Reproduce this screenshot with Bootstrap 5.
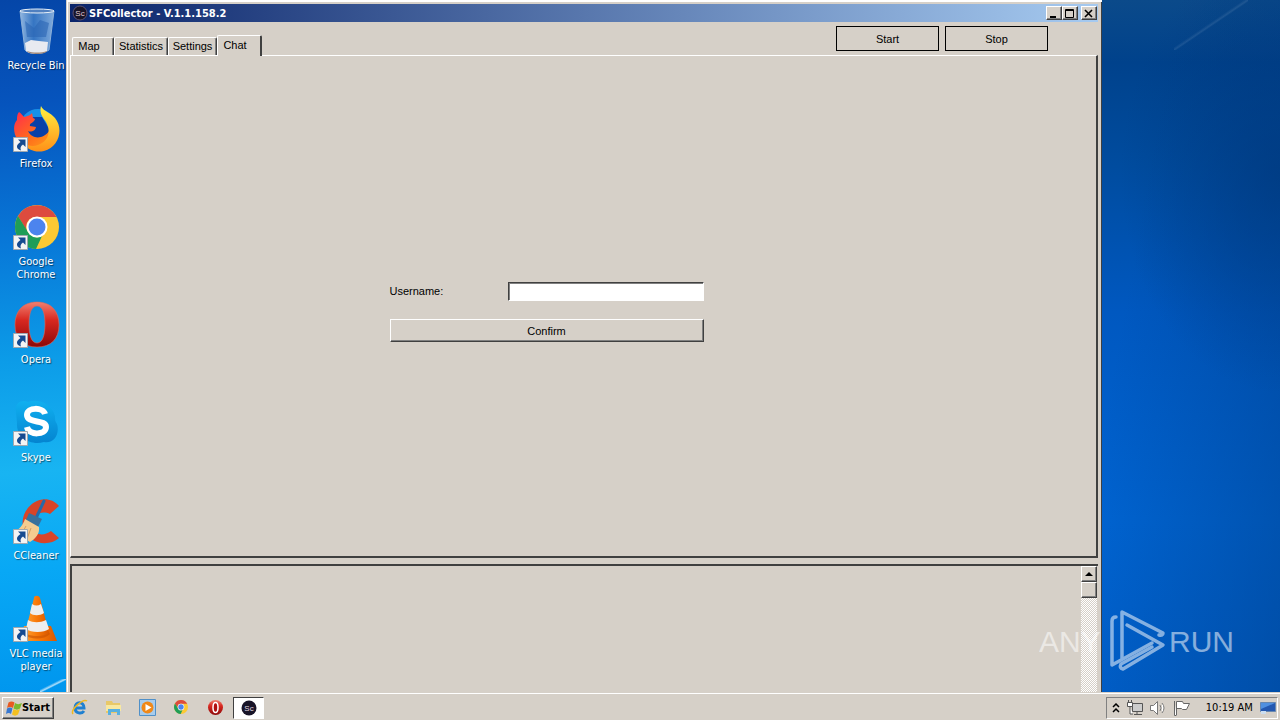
<!DOCTYPE html>
<html lang="en">
<head>
<meta charset="utf-8">
<meta name="viewport" content="width=device-width, initial-scale=1">
<title>SFCollector</title>
<link rel="stylesheet" href="https://cdn.jsdelivr.net/npm/bootstrap@5.3.0/dist/css/bootstrap.min.css">
<style>
:root { --face:#d6d0c8; --shade:#808080; --dark:#404040; }
body { font-family:"Liberation Sans",Arial,sans-serif; font-size:11px; line-height:13px; color:#000; background:#0058b8; }
button, input, textarea { font:inherit; color:inherit; border-radius:0; }
.tahoma { font-family:"DejaVu Sans Condensed","DejaVu Sans",sans-serif; }
.desk { background:
  linear-gradient(to bottom right, transparent 47%, #ffffff18 50%, transparent 52%) right 32px top 0/74px 50px no-repeat,
  radial-gradient(160px 220px at 100% 25%, #00357890, #00357800),
  linear-gradient(100deg, #0060d000 84%, #003a8078 100%),
  linear-gradient(180deg, #0b4a8a 0%, #00428c 9%, #004c9f 24%, #0058c0 45%, #0064d2 75%, #0060cc 100%); }
.shortcuts { width:66px; padding-left:6px;
  background:linear-gradient(to bottom right, transparent 40%, #ffffffb0 50%, transparent 56%) right bottom/26px 13px no-repeat,
  linear-gradient(176deg, #0546a8 0%, #0654bd 15%, #0878d8 35%, #0c9ce8 52%, #18b4f2 68%, #08a8f5 82%, #0096ee 100%); }
.shortcut { height:98px; padding-top:7px; color:#fff; text-shadow:1px 1px 1px #0008; }
.shortcut svg { width:48px; height:48px; margin-bottom:4px; }
.app { margin-right:178px; padding:4px 4px 0 4px; background:var(--face);
  box-shadow:inset 1px 0 #d4d0c8, inset 2px 2px #fff, inset -1px 0 #404040; }
.titlebar { height:18px; background:linear-gradient(90deg,#0a246a,#a6caf0); color:#fff; padding:0 1px 0 2px; }
.titlebar > svg { width:16px; height:16px; margin-right:1px; }
.raised { background:var(--face); border:1px solid; border-color:#fff var(--dark) var(--dark) #fff; box-shadow:inset -1px -1px var(--shade); padding:0; }
.caption-btn { width:16px; height:14px; }
.caption-btn + .caption-btn.shut { margin-left:3px; }
.caption-btn svg { width:12px; height:11px; display:block; margin:auto; }
.toolbar { height:33px; padding-right:50px; }
.tabs { padding-left:2px; }
.tab-btn { height:18px; background:var(--face); border:1px solid; border-color:#fff var(--dark) transparent #fff; border-bottom:0; box-shadow:inset -1px 0 var(--shade); padding:0; border-radius:2px 2px 0 0; }
.tab-btn.current { height:21px; margin-bottom:-1px; padding-bottom:2px; z-index:1; border-right-width:2px; box-shadow:none; }
.w-map { width:42px; padding-right:8px; } .w-stat { width:54px; } .w-set { width:49px; } .w-chat { width:45px; padding-right:8px; }
.run-btn { width:103px; height:25px; padding:2px 0 0; background:var(--face); border:1px solid #000; }
.page { flex:0 0 503px; border:1px solid #fff; border-right:2px solid var(--dark); border-bottom:2px solid var(--dark); padding:12px 74px 0 0; }
.login { width:314px; gap:18px; }
.login input { width:196px; height:19px; background:#fff; border:1px solid; border-color:#404040 #fff #fff #404040; box-shadow:inset 1px 1px #808080; padding:0 3px; }
.confirm { height:23px; padding-top:1px; }
.logbox { margin-top:6px; border:solid var(--dark); border-width:2px 0 0 2px; }
.logbox textarea { resize:none; background:var(--face); border:0; outline:0; }
.vbar { width:16px; margin-right:1px; background:repeating-conic-gradient(#fff 0 25%, var(--face) 0 50%) 0 0/2px 2px; }
.vbar .raised { height:16px; width:16px; }
.taskbar { height:28px; background:var(--face); border-top:1px solid var(--face); box-shadow:inset 0 1px #fff; padding:2px 2px 0; }
.start-btn { width:52px; height:22px; }
.start-btn svg { width:16px; height:16px; }
.quick { padding-left:17px; gap:17px; width:179px; }
.quick button, .quick svg { width:17px; height:17px; display:block; }
.plain { border:0; background:none; padding:0; }
.active-task { width:31px; height:22px; background:#fff; border:1px solid; border-color:#404040 #fff #fff #404040; padding:0; }
.tray { height:22px; width:172px; border:1px solid; border-color:var(--shade) #fff #fff var(--shade); padding:0 1px 0 5px; }
.watermark { right:47px; bottom:20px; width:194px; height:62px; opacity:.52; pointer-events:none; }
</style>
</head>
<body class="vh-100 overflow-hidden d-flex flex-column">

<svg width="0" height="0" class="position-absolute" aria-hidden="true">
  <defs>
    <linearGradient id="gRed" x2="0" y2="1"><stop stop-color="#f08070"/><stop offset=".4" stop-color="#d82820"/><stop offset="1" stop-color="#8c0808"/></linearGradient>
    <linearGradient id="gFox" x1="0" y1="0" x2="1" y2="1"><stop stop-color="#ff2a50"/><stop offset=".5" stop-color="#ff6a1c"/><stop offset="1" stop-color="#ffae18"/></linearGradient>
    <linearGradient id="gTail" x2="0" y2="1"><stop stop-color="#fff040"/><stop offset="1" stop-color="#ff9018"/></linearGradient>
    <linearGradient id="gCone" x2="1"><stop stop-color="#ffa030"/><stop offset=".5" stop-color="#f87808"/><stop offset="1" stop-color="#d85800"/></linearGradient>
    <linearGradient id="gSky" x2="0" y2="1"><stop stop-color="#10b0f0"/><stop offset="1" stop-color="#0484d0"/></linearGradient>
    <linearGradient id="gBin" x2="1"><stop stop-color="#b8d4ee" stop-opacity=".8"/><stop offset=".4" stop-color="#4a88cc" stop-opacity=".7"/><stop offset="1" stop-color="#a0c4e8" stop-opacity=".8"/></linearGradient>
  </defs>
  <symbol id="link" viewBox="0 0 15 15"><path fill="#f4f4f4" stroke="#a0a8b0" d="M.5.5h14v14H.5z"/><path fill="#164a90" d="M5 2.500h7.500V10L10 7.500C7.500 9 7 11 8 13.500 3 12 2.500 8 7.500 5z"/></symbol>
  <symbol id="chrome" viewBox="0 0 44 44"><circle cx="22" cy="22" r="22" fill="#fcc934"/><path fill="#dd4b3e" d="M3 11A22 22 0 0 1 41.500 12H22A10 10 0 0 0 12.500 27z"/><path fill="#1f9d58" d="M3 11 13 27A10 10 0 0 0 27 31L21 44A22 22 0 0 1 3 11z"/><circle cx="22" cy="22" r="10.500" fill="#fff"/><circle cx="22" cy="22" r="8.500" fill="#4c84ee"/></symbol>
  <symbol id="winflag" viewBox="0 0 16 16"><path fill="#e85a20" d="M2.500 2.500c2-1.500 4-1.500 6 0L7 8c-2-1.500-4-1.500-6 0z"/><path fill="#7cb82c" d="M9 3c2 1.500 4 1.500 7 0L14 8.500c-2 1.500-4 1.500-6.500 0z"/><path fill="#3878d0" d="M1 8.500c2-1.500 4-1.500 5.500 0L5 14c-1.500-1.500-3-1.500-5 0z"/><path fill="#f4c020" d="M7.500 9c2 1.500 4 1.500 6.500 0l-2 5.500c-2 1.500-4 1.500-6 0z"/></symbol>
</svg>

<main class="desk flex-grow-1 d-flex overflow-hidden position-relative">
  <nav class="shortcuts flex-shrink-0 tahoma text-center" aria-label="Desktop">
    <div class="shortcut"><svg viewBox="0 0 48 48"><path fill="url(#gBin)" stroke="#8cb0d8" d="M8 4 13 43c2 3 21 3 24 0L42 4z"/><path fill="#2c66b4" opacity=".6" d="m13 14 9 7 6-8 9 3-3 14H15z"/><path fill="#e8eaf0" d="m13 36 6-3 8 1 9 1-1 9c-4 4-18 4-21 0z"/><path fill="#a08878" d="M15 44c6 2 14 2 20 0-1 4-19 4-20 0z"/><ellipse cx="25" cy="4" rx="17" ry="2" fill="#5080c0" stroke="#e8f0f8"/></svg><div>Recycle Bin</div></div>
    <div class="shortcut"><svg viewBox="0 0 48 48"><circle cx="26" cy="22" r="18" fill="#1890e8"/><path fill="#0840a8" d="M18 12h12l9 15-11 11-14-8z"/><path fill="url(#gFox)" d="M7 7c2 1 3 3 5 5 3-1 6-1 8-4 1 3 0 5 3 6-1 4-6 4-5 7l6 1c-1 5-6 5-8 4 4 9 16 8 21 0l9 3c-4 14-18 19-30 14C2 38-1 21 5 15c0-3 0-6 2-8z"/><path fill="url(#gTail)" d="M29 1c-2 8 2 11 5 16 6 11 1 20-8 23-5 2-10 1-14-2 3 7 12 10 20 8 15-4 20-22 11-33C38 7 31 6 29 1z"/><use href="#link" x="1" y="32" width="15" height="15"/></svg><div>Firefox</div></div>
    <div class="shortcut"><svg viewBox="0 0 48 48"><use href="#chrome" x="3" y="2" width="44" height="44"/><use href="#link" x="1" y="32" width="15" height="15"/></svg><div>Google Chrome</div></div>
    <div class="shortcut"><svg viewBox="0 0 48 48"><path fill="url(#gRed)" fill-rule="evenodd" stroke="#e06858" stroke-width=".6" d="M25 1C11 1 3 10 3 24s8 22 22 22 22-8 22-22S39 1 25 1zm0 4c6 0 8 8 8 18s-2 19-8 19-8-9-8-19 2-18 8-18z"/><use href="#link" x="1" y="32" width="15" height="15"/></svg><div>Opera</div></div>
    <div class="shortcut"><svg viewBox="0 0 48 48"><path fill="url(#gSky)" d="M4 13C2 5 9 0 16 3c10-4 24 2 27 14 0 3 0 6 2 8 3 10-3 20-13 18C17 47 4 37 5 24z"/><path fill="none" stroke="#fff" stroke-width="6" d="M33 15c-2-7-18-7-18 1 0 9 19 4 19 12 0 8-17 9-19 0"/><use href="#link" x="1" y="32" width="15" height="15"/></svg><div>Skype</div></div>
    <div class="shortcut"><svg viewBox="0 0 48 48"><path fill="#d84428" d="M47 9 38 17c-10-5-19 3-18 12 2 9 11 11 19 5l8 7C36 51 14 46 11 30 7 10 32-8 47 9z"/><path stroke="#266aa8" stroke-width="3" stroke-linecap="round" d="m32 4-7 15"/><path fill="#38709c" d="m17 16 13 6-4 8-13-5z"/><path fill="#f4cc90" d="m13 22 14 8c1 7-4 12-9 15L2 35c5-2 9-7 11-13z"/><path stroke="#d89c60" d="m14 29-5 9m10-7-4 11"/><use href="#link" x="1" y="32" width="15" height="15"/></svg><div>CCleaner</div></div>
    <div class="shortcut"><svg viewBox="0 0 48 48"><path fill="url(#gCone)" d="M12 31h27l6 15H10z"/><path fill="#c85000" opacity=".6" d="M14 36c4 6 18 6 22 0l2 3c-6 6-20 6-26 0z"/><path fill="url(#gCone)" d="M22 3c0-3 5-3 6 0l9 35c-5 4-19 4-24 0z"/><path fill="#eee" d="M20 9c3 2 6 2 9 0l3 9c-4 3-11 3-14 0zM16 25c5 3 12 3 18 0l3 9c-5 4-18 4-23 0z"/><use href="#link" x="1" y="32" width="15" height="15"/></svg><div>VLC media player</div></div>
  </nav>

  <section class="app flex-grow-1 d-flex flex-column overflow-hidden">
    <header class="titlebar flex-shrink-0 d-flex align-items-center">
      <svg viewBox="0 0 16 16"><circle cx="8" cy="8" r="7" fill="#181428" stroke="#5a5070"/><text x="8" y="11" text-anchor="middle" font-size="8" fill="#e0c8d0" font-family="Liberation Sans,sans-serif">Sc</text></svg>
      <strong class="tahoma flex-grow-1">SFCollector - V.1.1.158.2</strong>
      <button class="raised caption-btn" aria-label="Minimize"><svg><path d="M2 8h6v2H2z"/></svg></button>
      <button class="raised caption-btn" aria-label="Maximize"><svg><path fill="none" stroke="#000" d="M1.500 1.500h8v8h-8zM1 2.500h9"/></svg></button>
      <button class="raised caption-btn shut" aria-label="Close"><svg><path fill="none" stroke="#000" stroke-width="1.600" d="m2 2 7 7m0-7-7 7"/></svg></button>
    </header>

    <div class="toolbar flex-shrink-0 d-flex justify-content-between align-items-end">
      <div class="tabs d-flex align-items-end" role="tablist">
        <button class="tab-btn w-map" role="tab">Map</button>
        <button class="tab-btn w-stat" role="tab">Statistics</button>
        <button class="tab-btn w-set" role="tab">Settings</button>
        <button class="tab-btn w-chat current position-relative" role="tab" aria-selected="true">Chat</button>
      </div>
      <div class="d-flex mb-1" style="gap:6px">
        <button class="run-btn">Start</button>
        <button class="run-btn">Stop</button>
      </div>
    </div>

    <div class="page d-flex justify-content-center align-items-center" role="tabpanel">
      <form class="login d-flex flex-column">
        <div class="d-flex justify-content-between align-items-center">
          <label for="user">Username:</label>
          <input id="user" type="text">
        </div>
        <button class="raised confirm" type="button">Confirm</button>
      </form>
    </div>

    <div class="logbox flex-grow-1 d-flex">
      <textarea class="flex-grow-1" readonly aria-label="Log"></textarea>
      <div class="vbar">
        <button class="raised d-block" aria-label="Scroll up"><svg class="d-block mx-auto" width="8" height="4"><path d="M4 0 8 4H0z"/></svg></button>
        <div class="raised"></div>
      </div>
    </div>
  </section>

  <svg class="watermark position-absolute" viewBox="0 0 194 62" fill="#fff" font-family="Liberation Sans,sans-serif" font-size="30">
    <text x="0" y="42">ANY</text>
    <text x="130" y="42">RUN</text>
    <g fill="none" stroke="#fff" stroke-width="3.500" stroke-linejoin="round" stroke-linecap="round"><path d="M77 7q-4 0-4 4v44l40-22"/><path d="M83 48V2l41 21q0 3-4 2M88 15l36 20-40 24q-4-1-2-5l31-17"/></g>
  </svg>
</main>

<footer class="taskbar flex-shrink-0 d-flex align-items-center tahoma">
  <button class="raised start-btn d-flex align-items-center justify-content-center fw-bold"><svg><use href="#winflag"/></svg>Start</button>
  <div class="quick d-flex align-items-center">
    <button class="plain" aria-label="Internet Explorer"><svg viewBox="0 0 17 17"><path fill="none" stroke="#2080d0" stroke-width="3" d="M4 9h9c0-7-9-7-9 0 0 6 7 6 9 3"/><path fill="none" stroke="#f0b820" stroke-width="1.500" d="M2 15C-1 11 12-1 16 2"/></svg></button>
    <button class="plain" aria-label="File Explorer"><svg viewBox="0 0 17 17"><path fill="#e8c868" d="M1 2h6l1 2h7v10H1z"/><path fill="#f8e8a0" d="M1 6h15v6H1z"/><path fill="#58b0e0" d="M3 10h12v6h-3v-3H6v3H3z"/></svg></button>
    <button class="plain" aria-label="Media Player"><svg viewBox="0 0 17 17"><path fill="#a8ccec" stroke="#5090c8" d="M.5.5h16v16H.5z"/><circle cx="8.500" cy="8.500" r="6" fill="#f08818"/><path fill="#fff" d="m6.500 5 6 3.500-6 3.500z"/></svg></button>
    <button class="plain" aria-label="Google Chrome"><svg viewBox="0 0 17 17"><use href="#chrome" x="1" y="1" width="14" height="14"/></svg></button>
    <button class="plain" aria-label="Opera"><svg viewBox="0 0 17 17"><circle cx="8.500" cy="8.500" r="7.500" fill="url(#gRed)"/><ellipse cx="8.500" cy="8.500" rx="2.500" ry="5" fill="#b01010" stroke="#fff" stroke-width="1.500"/></svg></button>
  </div>
  <button class="active-task" aria-label="SFCollector"><svg width="16" height="16" class="d-block mx-auto"><circle cx="8" cy="8" r="7.500" fill="#181428"/><text x="8" y="11" text-anchor="middle" font-size="8" fill="#e0d8e0" font-family="Liberation Sans,sans-serif">Sc</text></svg></button>
  <div class="tray ms-auto d-flex align-items-center justify-content-between">
    <svg width="8" height="10"><path fill="none" stroke="#000" stroke-width="1.500" d="m1 4 3-3 3 3M1 9l3-3 3 3"/></svg>
    <svg width="16" height="16"><path fill="#ccc" stroke="#555" d="M5.500 3.500h10v8h-10zM7 14.500h8M10 12v2"/><path fill="#fff" stroke="#555" d="M.5 2.500h5v4h-5zM1.500 0v2m3-2v2M3 7v7h3"/></svg>
    <svg width="16" height="16"><path fill="#fff" stroke="#777" d="M.5 5.500h3l4-4v13l-4-4h-3zM10 5q2 3 0 6m2-8q4 5 0 10"/></svg>
    <svg width="17" height="16"><path fill="#fff" stroke="#666" d="M2.500 15V1.500h6l1 2h6l-3 6h-4l-1-1h-5M.5 1v14.500h2"/></svg>
    <span class="ps-2">10:19 AM</span>
    <svg width="16" height="14"><path fill="#2458b0" stroke="#6888b0" d="M.5 1.500h15v9H.5z"/><path fill="#5090e0" d="M1 2h14L1 8z"/><path fill="#cde" d="M1 10h5v3H1z"/></svg>
  </div>
</footer>
<script src="https://cdn.jsdelivr.net/npm/bootstrap@5.3.0/dist/js/bootstrap.bundle.min.js"></script>
</body>
</html>
